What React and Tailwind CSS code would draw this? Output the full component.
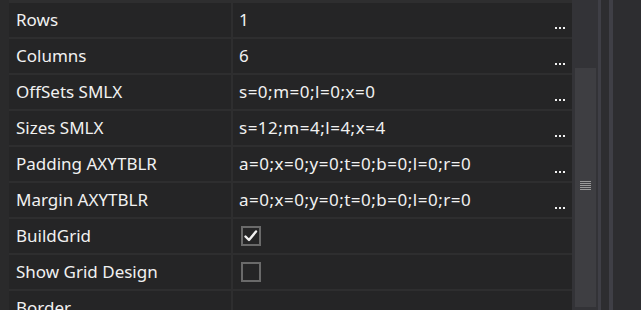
import React from 'react';

const rows = [
  { label: 'Rows', value: '1', more: true },
  { label: 'Columns', value: '6', more: true },
  { label: 'OffSets SMLX', value: 's=0;m=0;l=0;x=0', more: true },
  { label: 'Sizes SMLX', value: 's=12;m=4;l=4;x=4', more: true },
  { label: 'Padding AXYTBLR', value: 'a=0;x=0;y=0;t=0;b=0;l=0;r=0', more: true },
  { label: 'Margin AXYTBLR', value: 'a=0;x=0;y=0;t=0;b=0;l=0;r=0', more: true },
  { label: 'BuildGrid', check: true },
  { label: 'Show Grid Design', check: false },
  { label: 'Border' },
];

const CheckBox = ({ checked }) => (
  <div className="w-[20px] h-[20px] border-2 border-[#6a6a6a] flex items-center justify-center">
    {checked && (
      <svg width="16" height="16" viewBox="0 0 16 16">
        <path d="M2.5 8.5 L6 12 L13 3.5" fill="none" stroke="#f1f1f1" strokeWidth="2.4" strokeLinecap="round" strokeLinejoin="round" />
      </svg>
    )}
  </div>
);

const Dots = () => (
  <div className="absolute right-[7px] bottom-[8px] flex gap-[2px]">
    <div className="w-[2px] h-[2px] bg-[#f1f1f1]" />
    <div className="w-[2px] h-[2px] bg-[#f1f1f1]" />
    <div className="w-[2px] h-[2px] bg-[#f1f1f1]" />
  </div>
);

const PropRow = ({ row }) => (
  <div className="flex h-[34px] shrink-0">
    <div className="w-[222px] bg-[#252526] flex items-center pl-[7px] text-[#f1f1f1] whitespace-nowrap">
      {row.label}
    </div>
    <div className="w-[2px]" />
    <div className="flex-1 bg-[#252526] flex items-center pl-[6px] pr-[7px] text-[#f1f1f1] relative whitespace-nowrap">
      {row.check !== undefined ? (
        <div className="ml-[2px]">
          <CheckBox checked={row.check} />
        </div>
      ) : (
        <span className="tracking-[0.5px]">{row.value}</span>
      )}
      {row.more && <Dots />}
    </div>
  </div>
);

export default function App() {
  return (
    <div
      className="w-[641px] h-[310px] overflow-hidden flex bg-[#2d2d30] text-[17px]"
      style={{ fontFamily: '"Noto Sans", "Open Sans", sans-serif' }}
    >
      <div className="w-[9px] bg-[#2a2a2b]" />
      <div className="w-[563px] bg-[#2e2e2f] flex flex-col gap-[2px] pt-[3px]">
        {rows.map((r) => (
          <PropRow key={r.label} row={r} />
        ))}
      </div>
      <div className="w-[26px] bg-[#333337] flex flex-col pt-[68px] pl-[3px] pr-[2px]">
        <div className="h-[239px] bg-[#3e3e42] flex flex-col items-center pt-[113px] gap-[1px]">
          <div className="w-[11px] h-[1px] bg-[#9a9a9a]" />
          <div className="w-[11px] h-[1px] bg-[#9a9a9a]" />
          <div className="w-[11px] h-[1px] bg-[#9a9a9a]" />
          <div className="w-[11px] h-[1px] bg-[#9a9a9a]" />
          <div className="w-[11px] h-[1px] bg-[#9a9a9a]" />
        </div>
      </div>
      <div className="w-[3px] bg-[#3f3f46]" />
      <div className="w-[8px] bg-[#2d2d30]" />
      <div className="w-[4px] bg-[#3f3f46]" />
      <div className="flex-1 bg-[#2d2d30]" />
    </div>
  );
}
